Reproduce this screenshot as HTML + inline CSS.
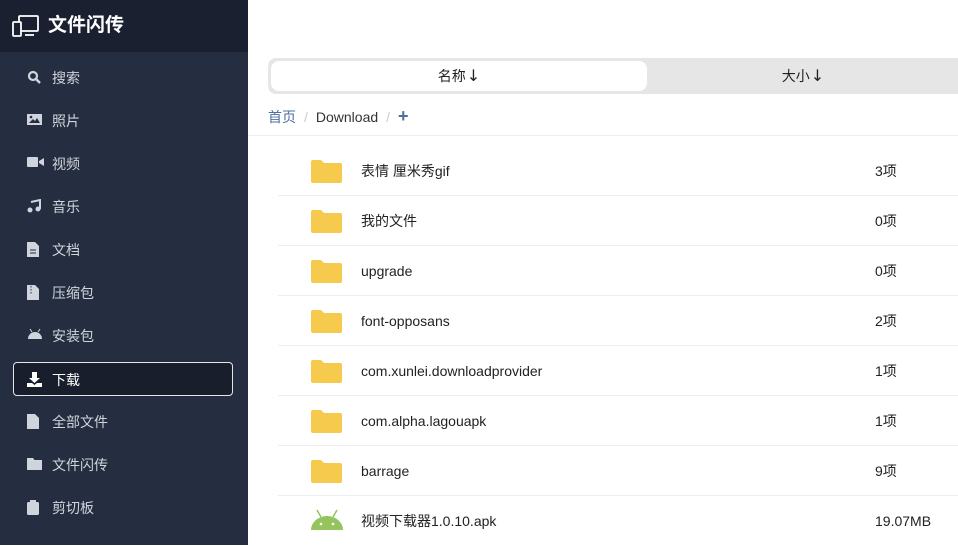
<!DOCTYPE html>
<html><head><meta charset="utf-8"><style>
*{margin:0;padding:0;box-sizing:border-box}
body{width:958px;height:545px;overflow:hidden;font-family:"Liberation Sans","Noto Sans CJK SC",sans-serif;background:#fff;position:relative}
#side{position:absolute;left:0;top:0;width:248px;height:545px;background:#252e40}
#hdr{height:52px;background:#1a2030;position:relative}
#hdr .t{position:absolute;left:48px;top:15px;color:#fff;font-size:19px;font-weight:bold;line-height:22px}
.it{position:absolute;left:13px;width:220px;height:34px;color:#d0d4dc;font-size:14px;line-height:16px}
.it span{position:absolute;left:39px;top:10px}
.it svg{position:absolute;left:14px;top:10px}
.act{background:#181e2c;border:1px solid #e6e6e6;border-radius:4px;color:#fff}
.act span{left:38px;top:9px}.act svg{left:13px;top:9px}
#sort{position:absolute;left:268px;top:58px;width:690px;height:36px;background:#e6e6e6;border-radius:8px 0 0 8px}
#sort .a{position:absolute;left:3px;top:3px;width:376px;height:30px;background:#fff;border-radius:8px;text-align:center;line-height:30px;font-size:14px;color:#222}
#sort .b{position:absolute;left:380px;top:0;width:310px;height:36px;text-align:center;line-height:36px;font-size:14px;color:#222}
.ar{font-family:"DejaVu Sans",sans-serif;font-size:16px;margin-left:1px}
#bc{position:absolute;left:268px;top:109px;font-size:14px;color:#333;line-height:16px}
#bc .h{color:#4e6fa0}#bc .s{color:#ccc;margin:0 8px}
#line{position:absolute;left:248px;top:135px;width:710px;height:1px;background:#eee}
.row{position:absolute;left:278px;width:680px;height:50px;border-bottom:1px solid #eee;font-size:14px;color:#222;line-height:16px}
.row .n{position:absolute;left:83px;top:17px}
.row .z{position:absolute;left:597px;top:17px}
.row svg{position:absolute;left:33px;top:13px}
</style></head><body>
<div id="side">
<div id="hdr">
<svg style="position:absolute;left:12px;top:15px" width="27" height="22" viewBox="0 0 27 22" fill="none" stroke="#fff" stroke-width="1.8"><rect x="7" y="1" width="19" height="15" rx="1"/><rect x="1" y="7" width="8" height="14" rx="1" fill="#1a2030"/><path d="M13 20h9"/></svg>
<div class="t">文件闪传</div></div>
<div class="it" style="top:60px"><svg width="14" height="14" viewBox="0 0 14 14"><circle cx="6" cy="6" r="4" fill="none" stroke="#d0d4dc" stroke-width="2.2"/><path d="M9 9l4 4" stroke="#d0d4dc" stroke-width="2.5"/></svg><span>搜索</span></div>
<div class="it" style="top:103px"><svg width="15" height="13" viewBox="0 0 15 13"><rect x="0" y="1" width="15" height="11" fill="#d0d4dc"/><path d="M2 10l4-4 2 2 2-3 3 5z" fill="#252e40"/><circle cx="4" cy="4" r="1.3" fill="#252e40"/></svg><span>照片</span></div>
<div class="it" style="top:146px"><svg width="17" height="12" viewBox="0 0 17 12"><rect x="0" y="1" width="11" height="10" rx="1" fill="#d0d4dc"/><path d="M12 5l5-3v8l-5-3z" fill="#d0d4dc"/></svg><span>视频</span></div>
<div class="it" style="top:189px"><svg width="14" height="14" viewBox="0 0 14 14"><path d="M4 3l9-2v9" stroke="#d0d4dc" stroke-width="2" fill="none"/><circle cx="3" cy="11" r="2.5" fill="#d0d4dc"/><circle cx="11" cy="10" r="2.5" fill="#d0d4dc"/></svg><span>音乐</span></div>
<div class="it" style="top:232px"><svg width="12" height="15" viewBox="0 0 12 15"><path d="M0 0h8l4 4v11H0z" fill="#d0d4dc"/><path d="M3 8h6M3 11h6" stroke="#252e40"/></svg><span>文档</span></div>
<div class="it" style="top:275px"><svg width="12" height="15" viewBox="0 0 12 15"><path d="M0 0h8l4 4v11H0z" fill="#d0d4dc"/><path d="M4 1v8" stroke="#252e40" stroke-dasharray="1.5 1.5"/></svg><span>压缩包</span></div>
<div class="it" style="top:318px"><svg width="16" height="12" viewBox="0 0 16 12"><path d="M1 11a7 7 0 0 1 14 0z" fill="#d0d4dc"/><path d="M3 1l2 3M13 1l-2 3" stroke="#d0d4dc"/></svg><span>安装包</span></div>
<div class="it act" style="top:362px"><svg width="15" height="15" viewBox="0 0 15 15"><path d="M5 0h5v6h3l-5.5 5L2 6h3z" fill="#fff"/><path d="M0 11h5l2.5 2 2.5-2h5v4H0z" fill="#fff"/></svg><span>下载</span></div>
<div class="it" style="top:404px"><svg width="12" height="15" viewBox="0 0 12 15"><path d="M0 0h8l4 4v11H0z" fill="#d0d4dc"/></svg><span>全部文件</span></div>
<div class="it" style="top:447px"><svg width="15" height="13" viewBox="0 0 15 13"><path d="M0 1h6l1.5 2H15v10H0z" fill="#d0d4dc"/></svg><span>文件闪传</span></div>
<div class="it" style="top:490px"><svg width="12" height="15" viewBox="0 0 12 15"><rect x="0" y="2" width="12" height="13" rx="1.5" fill="#d0d4dc"/><rect x="3" y="0" width="6" height="3" fill="#d0d4dc"/></svg><span>剪切板</span></div>
</div>
<div id="sort"><div class="a">名称<span class="ar">↓</span></div><div class="b">大小<span class="ar">↓</span></div></div>
<div id="bc"><span class="h">首页</span><span class="s">/</span>Download<span class="s">/</span><b style="color:#4e6fa0;font-size:18px;line-height:14px">+</b></div>
<div id="line"></div>
<div class="row" style="top:146px"><svg width="31" height="24" viewBox="0 0 31 24"><path d="M0 3a2 2 0 0 1 2-2h8l3 3h16a2 2 0 0 1 2 2v16a2 2 0 0 1-2 2H2a2 2 0 0 1-2-2z" fill="#f5ca4d"/></svg><div class="n">表情 厘米秀gif</div><div class="z">3项</div></div>
<div class="row" style="top:196px"><svg width="31" height="24" viewBox="0 0 31 24"><path d="M0 3a2 2 0 0 1 2-2h8l3 3h16a2 2 0 0 1 2 2v16a2 2 0 0 1-2 2H2a2 2 0 0 1-2-2z" fill="#f5ca4d"/></svg><div class="n">我的文件</div><div class="z">0项</div></div>
<div class="row" style="top:246px"><svg width="31" height="24" viewBox="0 0 31 24"><path d="M0 3a2 2 0 0 1 2-2h8l3 3h16a2 2 0 0 1 2 2v16a2 2 0 0 1-2 2H2a2 2 0 0 1-2-2z" fill="#f5ca4d"/></svg><div class="n">upgrade</div><div class="z">0项</div></div>
<div class="row" style="top:296px"><svg width="31" height="24" viewBox="0 0 31 24"><path d="M0 3a2 2 0 0 1 2-2h8l3 3h16a2 2 0 0 1 2 2v16a2 2 0 0 1-2 2H2a2 2 0 0 1-2-2z" fill="#f5ca4d"/></svg><div class="n">font-opposans</div><div class="z">2项</div></div>
<div class="row" style="top:346px"><svg width="31" height="24" viewBox="0 0 31 24"><path d="M0 3a2 2 0 0 1 2-2h8l3 3h16a2 2 0 0 1 2 2v16a2 2 0 0 1-2 2H2a2 2 0 0 1-2-2z" fill="#f5ca4d"/></svg><div class="n">com.xunlei.downloadprovider</div><div class="z">1项</div></div>
<div class="row" style="top:396px"><svg width="31" height="24" viewBox="0 0 31 24"><path d="M0 3a2 2 0 0 1 2-2h8l3 3h16a2 2 0 0 1 2 2v16a2 2 0 0 1-2 2H2a2 2 0 0 1-2-2z" fill="#f5ca4d"/></svg><div class="n">com.alpha.lagouapk</div><div class="z">1项</div></div>
<div class="row" style="top:446px"><svg width="31" height="24" viewBox="0 0 31 24"><path d="M0 3a2 2 0 0 1 2-2h8l3 3h16a2 2 0 0 1 2 2v16a2 2 0 0 1-2 2H2a2 2 0 0 1-2-2z" fill="#f5ca4d"/></svg><div class="n">barrage</div><div class="z">9项</div></div>
<div class="row" style="top:496px;border:none"><svg width="34" height="24" viewBox="0 0 34 24" style="left:32px;top:11px"><path d="M1 23a16 14 0 0 1 32 0z" fill="#95c45f"/><path d="M7 3l4 7M27 3l-4 7" stroke="#95c45f" stroke-width="1.5"/><circle cx="11" cy="17" r="1.3" fill="#fff"/><circle cx="23" cy="17" r="1.3" fill="#fff"/></svg><div class="n">视频下载器1.0.10.apk</div><div class="z">19.07MB</div></div>
</body></html>
